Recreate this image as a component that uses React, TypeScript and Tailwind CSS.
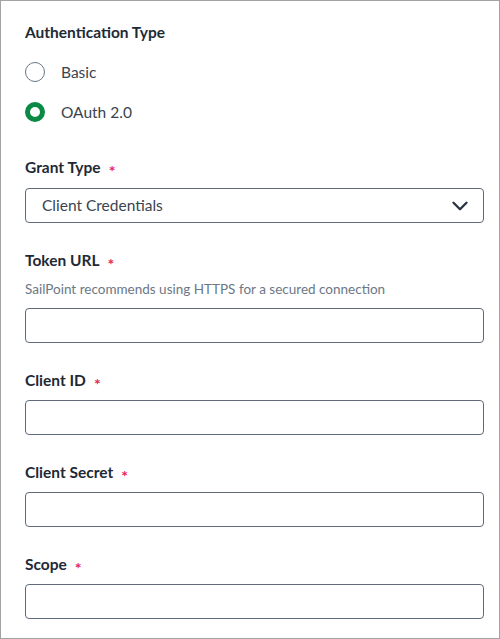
import { ChevronDown } from "lucide-react";

const font = { fontFamily: "Lato, 'Liberation Sans', sans-serif" };

function Label({ text, required = true }: { text: string; required?: boolean }) {
    return (
        <div className="flex h-5 items-center pt-0.5 text-[15.5px] font-bold text-[#1e2a36]">
            {text}
            {required && (
                <span className="relative top-[3px] ml-2 text-[16px] font-bold leading-none text-[#e4235b]">*</span>
            )}
        </div>
    );
}

function Radio({ label, checked }: { label: string; checked?: boolean }) {
    return (
        <label className="flex h-10 items-center">
            <span
                className={
                    checked
                        ? "h-5 w-5 rounded-full border-[5px] border-[#0b8a45] bg-white"
                        : "h-5 w-5 rounded-full border-[1.5px] border-[#6b7785] bg-white"
                }
            ></span>
            <span className="ml-4 pt-0.5 text-[15.5px] text-[#3a4450]">{label}</span>
        </label>
    );
}

function Field({ label, helper }: { label: string; helper?: string }) {
    return (
        <div className="flex flex-col">
            <Label text={label} />
            {helper && (
                <div className="mt-2.5 h-[18px] text-[13.5px] leading-[18px] text-[#6b7785]">{helper}</div>
            )}
            <input
                type="text"
                className="mt-2.5 h-[35px] w-full rounded border border-[#5f6b78] bg-white px-4 outline-none"
            />
        </div>
    );
}

export default function App() {
    return (
        <div
            style={font}
            className="box-border h-[639px] w-[500px] border border-[#a3a3a3] bg-white pb-4 pl-6 pr-[15px] pt-[21px]"
        >
            <div className="flex h-5 items-center pt-0.5 text-[15.5px] font-bold text-[#1e2a36]">Authentication Type</div>
            <div className="mt-[10px] flex flex-col">
                <Radio label="Basic" />
                <Radio label="OAuth 2.0" checked />
            </div>

            <div className="mt-[25px] flex flex-col gap-[27px]">
                <div className="flex flex-col">
                    <Label text="Grant Type" />
                    <div className="mt-[11px] flex h-[35px] w-full items-center justify-between rounded border border-[#5f6b78] bg-white pl-4 pr-2.5">
                        <span className="pt-px text-[15.5px] text-[#3a4450]">Client Credentials</span>
                        <ChevronDown size={26} strokeWidth={2.2} className="text-[#2a3440]" />
                    </div>
                </div>
                <Field label="Token URL" helper="SailPoint recommends using HTTPS for a secured connection" />
                <Field label="Client ID" />
                <Field label="Client Secret" />
                <Field label="Scope" />
            </div>
        </div>
    );
}
